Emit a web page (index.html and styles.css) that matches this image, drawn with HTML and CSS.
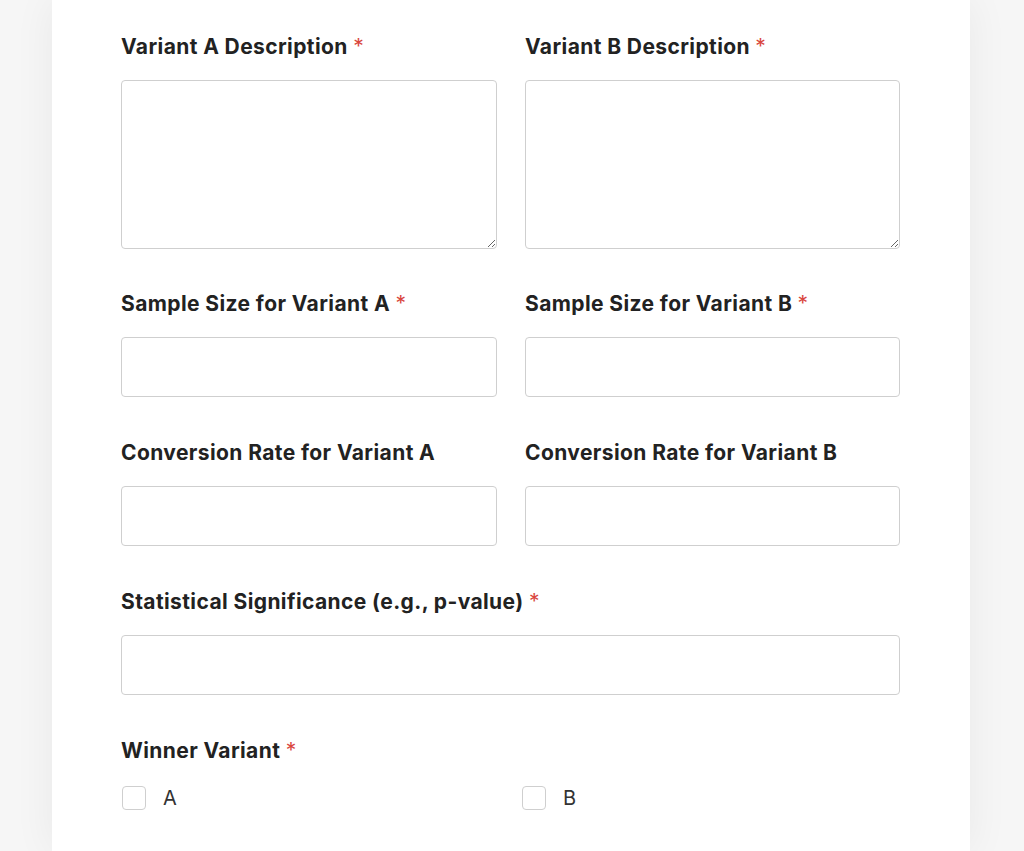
FILE: index.html
```html
<!DOCTYPE html>
<html>
<head>
<meta charset="utf-8">
<link rel="stylesheet" href="styles.css">
</head>
<body>
<div class="page">
  <form class="card">
    <div class="grid">
      <div class="field">
        <label class="label">Variant A Description <span class="req">*</span></label>
        <textarea class="textarea"></textarea>
      </div>
      <div class="field">
        <label class="label">Variant B Description <span class="req">*</span></label>
        <textarea class="textarea"></textarea>
      </div>
      <div class="field">
        <label class="label">Sample Size for Variant A <span class="req">*</span></label>
        <input class="input" type="text">
      </div>
      <div class="field">
        <label class="label">Sample Size for Variant B <span class="req">*</span></label>
        <input class="input" type="text">
      </div>
      <div class="field">
        <label class="label">Conversion Rate for Variant A</label>
        <input class="input" type="text">
      </div>
      <div class="field">
        <label class="label">Conversion Rate for Variant B</label>
        <input class="input" type="text">
      </div>
      <div class="field full">
        <label class="label">Statistical Significance (e.g., p-value) <span class="req">*</span></label>
        <input class="input" type="text">
      </div>
      <div class="field full">
        <label class="label">Winner Variant <span class="req">*</span></label>
        <div class="options">
          <label class="option"><span class="box"></span><span class="opt-text">A</span></label>
          <label class="option"><span class="box"></span><span class="opt-text">B</span></label>
        </div>
      </div>
    </div>
  </form>
</div>
</body>
</html>
```

FILE: styles.css
```css
html, body {
  margin: 0;
  padding: 0;
}
body {
  background: #f6f6f6;
  font-family: Inter, "Liberation Sans", sans-serif;
  color: #222;
}
.page {
  width: 918px;
  margin-left: 52px;
}
.card {
  background: #fff;
  box-shadow: 0 0 40px rgba(0, 0, 0, 0.06);
  padding: 33px 70px 40px 69px;
  min-height: 851px;
  box-sizing: border-box;
}
.grid {
  display: grid;
  grid-template-columns: 376px 375px;
  column-gap: 28px;
  row-gap: 42px;
}
.full {
  grid-column: 1 / -1;
}
.field {
  display: flex;
  flex-direction: column;
}
.label {
  font-size: 21px;
  font-weight: 700;
  line-height: 28px;
  letter-spacing: 0.4px;
  color: #222;
  margin-bottom: 19px;
}
.req {
  color: #d9463e;
  font-weight: 400;
}
.textarea, .input {
  box-sizing: border-box;
  border: 1.5px solid #cfcfcf;
  border-radius: 4px;
  background: #fff;
  font: inherit;
  width: 100%;
  margin: 0;
}
.textarea {
  height: 169px;
  margin-bottom: -1px;
  resize: vertical;
}
.input {
  height: 60px;
}
.options {
  display: grid;
  grid-template-columns: 400px 1fr;
  margin-top: 0;
}
.option {
  display: flex;
  align-items: center;
  gap: 17px;
  padding-left: 1px;
}
.box {
  width: 24px;
  height: 24px;
  box-sizing: border-box;
  border: 1.5px solid #cfcfcf;
  border-radius: 4px;
}
.opt-text {
  font-size: 20px;
  line-height: 28px;
  color: #333;
}
```
